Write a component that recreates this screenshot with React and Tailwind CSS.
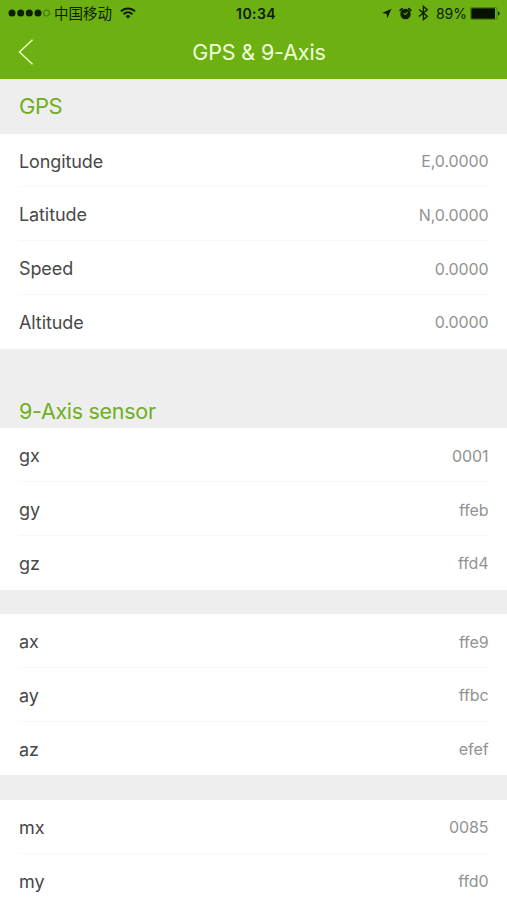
const gpsRows = [
    { label: "Longitude", value: "E,0.0000" },
    { label: "Latitude", value: "N,0.0000" },
    { label: "Speed", value: "0.0000" },
    { label: "Altitude", value: "0.0000" },
];

const gyroRows = [
    { label: "gx", value: "0001" },
    { label: "gy", value: "ffeb" },
    { label: "gz", value: "ffd4" },
];

const accelRows = [
    { label: "ax", value: "ffe9" },
    { label: "ay", value: "ffbc" },
    { label: "az", value: "efef" },
];

const magnetRows = [
    { label: "mx", value: "0085" },
    { label: "my", value: "ffd0" },
];

const StatusBar = () => (
    <div className="grid h-[26px] grid-cols-[1fr_auto_1fr] items-center pl-2 pr-[6px] text-[#0c2000]">
        <div className="flex items-center">
            <svg width="43" height="10" viewBox="0 0 43 10" fill="currentColor">
                <circle cx="4" cy="5" r="3.5" />
                <circle cx="12.7" cy="5" r="3.5" />
                <circle cx="21.3" cy="5" r="3.5" />
                <circle cx="30" cy="5" r="3.5" />
                <circle cx="38.5" cy="5" r="3" fill="none" stroke="currentColor" strokeWidth="0.8" opacity="0.6" />
            </svg>
            <span className="ml-[3px] font-['Noto_Sans_CJK_SC',sans-serif] text-[14.5px] leading-[26px]">中国移动</span>
            <svg className="ml-[8px]" width="16" height="12" viewBox="0 0 16 12" fill="none" stroke="currentColor" strokeWidth="2">
                <path d="M1 4.4a10 10 0 0 1 14 0" />
                <path d="M3.6 7.2a6.2 6.2 0 0 1 8.8 0" />
                <path d="M8 11.6 5.6 9.2a3.4 3.4 0 0 1 4.8 0z" fill="currentColor" stroke="none" />
            </svg>
        </div>
        <span className="pl-[3px] text-[14px] font-semibold tracking-[0.4px]">10:34</span>
        <div className="flex items-center justify-end">
            <svg width="11" height="11" viewBox="0 0 11 11" fill="currentColor">
                <path d="M10.5.8 6.3 10.3 5.5 5.8 1 5z" />
            </svg>
            {/* alarm */}
            <svg className="ml-[7px]" width="13" height="13" viewBox="0 0 13 13" fill="none" stroke="currentColor">
                <circle cx="6.5" cy="7" r="5.2" fill="currentColor" stroke="none" />
                <path d="M1.2 3.4 3.2 1.6M11.8 3.4 9.8 1.6" strokeWidth="1.8" strokeLinecap="round" />
                <path d="M6.5 7.5 8.6 5M6.5 7.5 4.6 6.3" stroke="#6db012" strokeWidth="1.1" />
            </svg>
            <svg className="ml-[6px]" width="11" height="16" viewBox="0 0 11 16" fill="none" stroke="currentColor" strokeWidth="1.4">
                <path d="M1 4.5 9.3 11.3 5.4 14.6V1.4L9.3 4.7 1 11.5" />
            </svg>
            <span className="ml-[7px] text-[14px]">89%</span>
            <svg className="ml-[3px]" width="31" height="13" viewBox="0 0 31 13" fill="currentColor">
                <rect x="0.5" y="0.5" width="26.5" height="12" rx="1.5" fill="none" stroke="currentColor" strokeWidth="0.5" opacity="0.6" />
                <rect x="1.3" y="1.3" width="23.7" height="10.4" rx="0.5" fill="#061200" />
                <path d="M28 4.5c2 .6 2 3.4 0 4z" />
            </svg>
        </div>
    </div>
);

const Row = ({ label, value }) => (
    <div className="flex h-[53.75px] items-center justify-between border-b border-[#f8f8f8] pt-[2px] last:border-transparent">
        <span className="text-[18px] tracking-[-0.1px] text-[#484848]">{label}</span>
        <span className="text-[16px] tracking-[-0.1px] text-[#929292]">{value}</span>
    </div>
);

const RowGroup = ({ rows }) => (
    <div className="bg-white pl-[19px] pr-[18.5px]">
        {rows.map((row) => (
            <Row key={row.label} label={row.label} value={row.value} />
        ))}
    </div>
);

const App = () => {
    return (
        <div className="h-[900px] w-[507px] overflow-hidden bg-[#eeeeee] font-['Inter',sans-serif]">
            <header className="h-[79px] bg-[#6db012]">
                <StatusBar />
                <div className="grid h-[53px] grid-cols-[1fr_auto_1fr] items-center pl-[18px] pr-[8px]">
                    <svg className="-mt-[2px]" width="16" height="28" viewBox="0 0 16 28" fill="none" stroke="#e6ffc4" strokeWidth="1.5">
                        <path d="M14.5 1.7 1.5 14 14.5 26.3" />
                    </svg>
                    <h1 className="pl-px text-[21.5px] tracking-[-0.15px] text-[#efffda]">GPS &amp; 9-Axis</h1>
                </div>
            </header>

            <h2 className="flex h-[54.7px] items-center pl-[19px] text-[22px] tracking-[-0.5px] text-[#70ae22]">GPS</h2>
            <RowGroup rows={gpsRows} />

            <h2 className="flex h-[79.7px] items-end pl-[19px] text-[21.5px] leading-[34.5px] tracking-[-0.3px] text-[#70ae22]">9-Axis sensor</h2>
            <div className="flex flex-col gap-[24.5px]">
                <RowGroup rows={gyroRows} />
                <RowGroup rows={accelRows} />
                <RowGroup rows={magnetRows} />
            </div>
        </div>
    );
};

export default App;
